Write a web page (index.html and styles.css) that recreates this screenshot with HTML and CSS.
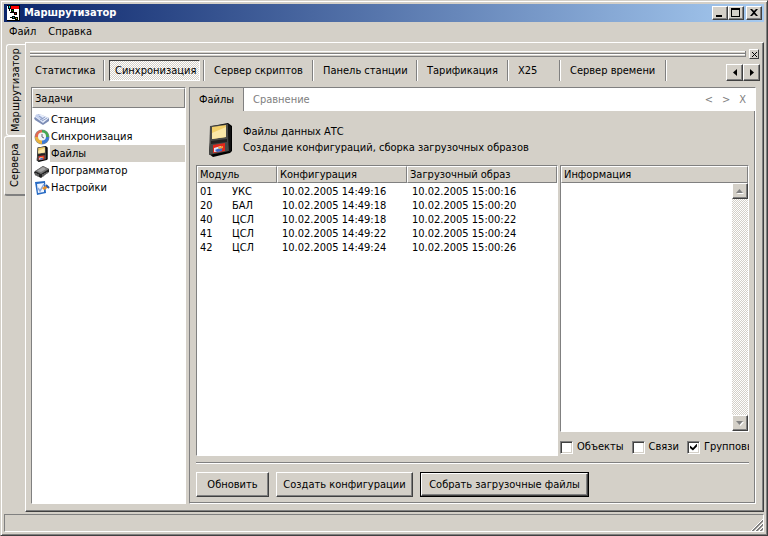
FILE: index.html
```html
<!DOCTYPE html>
<html lang="ru">
<head>
<meta charset="utf-8">
<title>Маршрутизатор</title>
<link rel="stylesheet" href="styles.css">
</head>
<body>
<svg class="defs" width="0" height="0" aria-hidden="true">
  <symbol id="floppy" viewBox="0 0 24 34">
    <path d="M4 3 20 0 24 3V28L22 30 5 34 1 31V28z" fill="#000"/>
    <path d="M2 3 20 1 21 28 1 32z" fill="#4a4a48"/>
    <path d="M20 1 23 4V28L21 29z" fill="#111"/>
    <path d="M4 4 18 2V14L4 16z" fill="#f2cf6a"/>
    <path d="M4 10 18 4V14L4 16z" fill="#fae7a8"/>
    <path d="M3 18 19 16V19L3 21z" fill="#222"/>
    <path d="M5 22 17 20V28L5 30z" fill="#e0281c"/>
    <path d="M6 25 13 23V28L6 29z" fill="#dfe6f5"/>
    <path d="M7 27 14 24 14 28 9 29z" fill="#3b67c4"/>
    <path d="M10 24 15 23V25L11 26z" fill="#f5a13a"/>
  </symbol>
</svg>
<div class="window">
  <header class="title">
    <svg class="app-icon" viewBox="0 0 13 16" shape-rendering="crispEdges" aria-hidden="true">
      <path d="M0 0H13V16H0z" fill="#000"/><path d="M4 1H12V4H4z" fill="#f00"/><path d="M3 4H12V15H3z" fill="#fff"/>
      <path d="M0 1H4V15H0z" fill="#fff"/>
      <path d="M1 0H4V4H1zM2 4H3V13H5V12H3V8H6V7H3z" fill="#000"/><path d="M2 1H3V3H2z" fill="#0dd"/>
      <path d="M4 4H7V8H4zM7 7H10V10H7zM5 11H8V14H5zM8 12H11V15H8z" fill="#000"/>
      <path d="M5 5H6V6H5z" fill="#0a0"/><path d="M8 8H9V9H8z" fill="#d00"/><path d="M9 13H10V14H9z" fill="#cc0"/><path d="M6 12H7V13H6z" fill="#0aa"/>
    </svg>
    <h1>Маршрутизатор</h1>
    <div class="caption">
      <button class="raised" aria-label="Свернуть"><svg viewBox="0 0 12 10"><path d="M2 7H8V9H2z"/></svg></button>
      <button class="raised" aria-label="Развернуть"><svg viewBox="0 0 12 10"><path d="M1 0H10V9H1zM2 2V8H9V2z" fill-rule="evenodd"/></svg></button>
      <button class="raised close" aria-label="Закрыть"><svg viewBox="0 0 12 10"><path d="M2 1H4L6 3 8 1H10L7 4.500 10 8H8L6 6 4 8H2L5 4.500z"/></svg></button>
    </div>
  </header>
  <nav class="menu"><button>Файл</button><button>Справка</button></nav>
  <div class="body">
    <div class="side-tabs">
      <button class="side-tab first">Маршрутизатор</button>
      <button class="side-tab current">Сервера</button>
    </div>
    <main class="page">
      <div class="grip"><span class="bars"></span><button class="raised tiny" aria-label="Скрыть панель"><svg viewBox="0 0 7 7"><path d="M1 1 6 6M6 1 1 6" stroke="#000" fill="none"/></svg></button></div>
      <div class="toolbar">
        <div class="tools">
          <div><button>Статистика</button></div>
          <div><button class="pressed">Синхронизация</button></div>
          <div><button>Сервер скриптов</button></div>
          <div><button>Панель станции</button></div>
          <div><button>Тарификация</button></div>
          <div><button>X25</button></div>
          <div><button>Сервер времени</button></div>
        </div>
        <div class="scrollers">
          <button class="raised" aria-label="Назад"><svg viewBox="0 0 4 7"><path d="M4 0V7L0 3.500z"/></svg></button>
          <button class="raised" aria-label="Вперёд"><svg viewBox="0 0 4 7"><path d="M0 0V7L4 3.500z"/></svg></button>
        </div>
      </div>
      <div class="columns">
        <section class="tasks">
          <h2 class="head">Задачи</h2>
          <ul>
            <li><svg viewBox="0 0 16 16"><path d="M0 6 5 2 15 6V9L9 13 1 8z" fill="#7d8db5"/><path d="M1 5 6 2 15 6 9 11z" fill="#e8eefb"/><path d="M1 4 3 2 10 6 8 9z" fill="#c3d0ee"/><path d="M6 8 11 5M8 9 13 6M5 4 9 7" stroke="#8e9dc4"/></svg><button>Станция</button></li>
            <li><svg viewBox="0 0 16 16"><circle cx="8" cy="8" r="7.500" fill="#8b8f96"/><path d="M8 8V1A7 7 0 0 1 15 8z" fill="#45a852"/><path d="M8 8H15A7 7 0 0 1 8 15z" fill="#3c7ad6"/><path d="M8 8V15A7 7 0 0 1 1 8z" fill="#eab23c"/><path d="M8 8H1A7 7 0 0 1 8 1z" fill="#e36a50"/><circle cx="8" cy="7.500" r="4" fill="#f1f4f7"/><path d="M8 5V8L10 9" fill="none" stroke="#667"/></svg><button>Синхронизация</button></li>
            <li class="selected"><svg viewBox="0 0 16 16"><use href="#floppy" x="2" y="0" width="12" height="16"/></svg><button>Файлы</button></li>
            <li><svg viewBox="0 0 16 16"><path d="M0 9 9 3 15 6V9L7 15 1 12z" fill="#222"/><path d="M1 8 9 3 15 6 7 11z" fill="#777"/><path d="M3 8 9 4 12 6 7 9z" fill="#a6a6a6"/><path d="M2 10V13M4 11V14M9 11V14M11 10V12M13 9V11" stroke="#999"/></svg><button>Программатор</button></li>
            <li><svg viewBox="0 0 16 16"><path d="M1 2 11 1 12 13 3 15z" fill="#286bc4"/><path d="M3 4 10 3 10 12 4 13z" fill="#f2f7ff"/><path d="M4 8 6 11 10 4" fill="none" stroke="#8aa6d8" stroke-width="1.500"/><path d="M8 8 13 5 15 7 10 10z" fill="#e8902c"/><path d="M12 5 15 8" stroke="#2a5aa8" stroke-width="2"/></svg><button>Настройки</button></li>
          </ul>
        </section>
        <section class="content">
          <div class="doc-tabs">
            <button class="doc-tab active">Файлы</button>
            <button class="doc-tab">Сравнение</button>
            <span class="doc-nav"><button>&lt;</button><button>&gt;</button><button>X</button></span>
          </div>
          <div class="inner">
            <div class="banner">
              <svg viewBox="0 0 24 34"><use href="#floppy" width="24" height="34"/></svg>
              <p>Файлы данных АТС<br>Создание конфигураций, сборка загрузочных образов</p>
            </div>
            <div class="panes">
              <div class="list sunken">
                <table>
                  <colgroup><col class="c1"><col class="c2"><col class="c3"><col></colgroup>
                  <thead><tr><th colspan="2">Модуль</th><th>Конфигурация</th><th>Загрузочный образ</th></tr></thead>
                  <tbody>
                    <tr><td>01</td><td>УКС</td><td>10.02.2005 14:49:16</td><td>10.02.2005 15:00:16</td></tr>
                    <tr><td>20</td><td>БАЛ</td><td>10.02.2005 14:49:18</td><td>10.02.2005 15:00:20</td></tr>
                    <tr><td>40</td><td>ЦСЛ</td><td>10.02.2005 14:49:18</td><td>10.02.2005 15:00:22</td></tr>
                    <tr><td>41</td><td>ЦСЛ</td><td>10.02.2005 14:49:22</td><td>10.02.2005 15:00:24</td></tr>
                    <tr><td>42</td><td>ЦСЛ</td><td>10.02.2005 14:49:24</td><td>10.02.2005 15:00:26</td></tr>
                  </tbody>
                </table>
              </div>
              <div class="info">
                <div class="info-box sunken">
                  <label class="head" for="info">Информация</label>
                  <div class="info-body">
                    <textarea id="info" readonly></textarea>
                    <div class="scrollbar">
                      <button class="raised" aria-label="Вверх"><svg viewBox="0 0 8 5"><path d="M4 1 8 5H1z" fill="#fff"/><path d="M3.500 0 7 4H0z" fill="#808080"/></svg></button>
                      <button class="raised" aria-label="Вниз"><svg viewBox="0 0 8 5"><path d="M1 1H8L4.500 5z" fill="#fff"/><path d="M0 0H7L3.500 4z" fill="#808080"/></svg></button>
                    </div>
                  </div>
                </div>
                <div class="checks">
                  <label><input type="checkbox">Объекты</label>
                  <label><input type="checkbox">Связи</label>
                  <label><input type="checkbox" checked>Групповые</label>
                </div>
              </div>
            </div>
            <div class="actions">
              <button class="raised">Обновить</button>
              <button class="raised wide">Создать конфигурации</button>
              <button class="default widest"><span class="raised">Собрать загрузочные файлы</span></button>
            </div>
          </div>
        </section>
      </div>
    </main>
  </div>
  <footer class="status"><svg viewBox="0 0 12 12" aria-hidden="true"><path d="M0 12 12 0M4 12 12 4M8 12 12 8" stroke="#fff"/><path d="M1 12 12 1M2 12 12 2M5 12 12 5M6 12 12 6M9 12 12 9M10 12 12 10" stroke="#808080"/></svg></footer>
</div>
</body>
</html>
```
FILE: styles.css
```css
:root {
  --face: #d4d0c8;
  --shadow: #808080;
  --dark: #404040;
}
* { box-sizing: border-box; }
body {
  margin: 0;
  background: var(--face);
  color: #000;
  font: 11px/14px "DejaVu Sans Condensed", "DejaVu Sans", sans-serif;
}
button {
  font: inherit;
  color: inherit;
  background: none;
  border: 0;
  padding: 0;
  white-space: nowrap;
}
h1, h2, p, ul { margin: 0; padding: 0; font: inherit; }
svg { display: block; flex: none; }
.defs { position: absolute; }

.raised {
  display: flex;
  align-items: center;
  justify-content: center;
  background: var(--face);
  border: 1px solid;
  border-color: #fff var(--dark) var(--dark) #fff;
  box-shadow: inset -1px -1px var(--shadow);
}
.sunken {
  background: #fff;
  border: 1px solid;
  border-color: var(--shadow) #fff #fff var(--shadow);
}

.window {
  height: 100vh;
  display: flex;
  flex-direction: column;
  padding: 3px 3px 3px;
  border: 1px solid;
  border-color: var(--face) var(--dark) var(--dark) var(--face);
  box-shadow: inset 1px 1px #fff, inset -1px -1px var(--shadow);
}
.title {
  display: flex;
  align-items: center;
  gap: 4px;
  height: 18px;
  padding: 0 2px 0 3px;
  background: linear-gradient(90deg, #0a246a, #a6caf0);
}
.title h1 { flex: 1; color: #fff; font-weight: bold; }
.app-icon { width: 13px; height: 16px; }
.caption { display: flex; }
.caption .raised { width: 16px; height: 14px; }
.caption .close { margin-left: 2px; }
.caption svg { width: 12px; height: 10px; }

.menu { display: flex; gap: 12px; height: 20px; padding: 0 5px; }

.body { flex: 1; display: flex; min-height: 0; }
.side-tabs { width: 21px; padding-top: 2px; display: flex; flex-direction: column; align-items: flex-end; }
.side-tab {
  writing-mode: vertical-rl;
  transform: rotate(180deg);
  width: 19px;
  height: 92px;
  border: 1px solid #fff;
  border-left: 0;
  border-radius: 0 3px 3px 0;
}
.side-tab.current {
  width: 21px;
  height: 60px;
  border-top: 2px solid var(--shadow);
}
.page {
  flex: 1;
  min-width: 0;
  display: flex;
  flex-direction: column;
  padding: 6px 7px 7px 4px;
  border: 1px solid;
  border-color: #fff var(--dark) var(--dark) #fff;
  box-shadow: inset -1px -1px var(--shadow);
}
.grip { display: flex; align-items: center; gap: 3px; height: 10px; margin-right: -3px; }
.bars {
  flex: 1;
  height: 6px;
  background: linear-gradient(#fff 1px, var(--face) 1px 2px, var(--shadow) 2px 3px, #fff 3px 4px, var(--face) 4px 5px, var(--shadow) 5px);
  border-right: 1px solid var(--shadow);
}
.tiny { width: 10px; height: 10px; box-shadow: none; }
.tiny svg { width: 7px; height: 7px; }

.toolbar { display: flex; justify-content: space-between; height: 28px; padding-top: 1px; margin-right: -4px; }
.tools { display: grid; grid-template-columns: 75px 100px 109px 104px 91px 52px 106px; height: 21px; }
.tools div {
  display: flex;
  padding: 0 4px;
  border-right: 1px solid #fff;
  box-shadow: inset -1px 0 var(--shadow);
}
.tools div:first-child { padding-left: 0; }
.tools button { flex: 1; padding-left: 5px; text-align: left; }
.tools .pressed {
  border: 1px solid;
  border-color: var(--dark) #fff #fff var(--dark);
  padding-top: 1px;
  background: repeating-conic-gradient(#fff 0 25%, var(--face) 0 50%) 0 0 / 2px 2px;
}
.scrollers { display: flex; padding-top: 4px; }
.scrollers .raised { width: 17px; height: 17px; }
.scrollers svg { width: 4px; height: 7px; }

.columns { flex: 1; min-height: 0; display: grid; grid-template-columns: 155px 1fr; gap: 3px; padding-left: 1px; }
.head {
  display: block;
  height: 17px;
  line-height: 16px;
  padding: 0 2px;
  background: var(--face);
  border: 1px solid;
  border-color: #fff var(--shadow) var(--shadow) #fff;
}
.tasks { background: #fff; border: 1px solid; border-color: var(--shadow) #fff #fff var(--shadow); }
.tasks .head { height: 20px; line-height: 20px; }
.tasks ul { list-style: none; padding-top: 3px; }
.tasks li { display: flex; align-items: center; height: 17px; padding-left: 2px; }
.tasks li svg { width: 16px; height: 16px; }
.tasks li button { flex: 1; height: 17px; padding-left: 1px; text-align: left; }
.tasks .selected button { background: var(--face); }

.content {
  display: flex;
  flex-direction: column;
  min-width: 0;
  border: 1px solid;
  border-color: var(--shadow) #fff #fff var(--shadow);
  box-shadow: inset -1px -1px var(--shadow);
}
.doc-tabs { display: flex; height: 23px; background: #fff; }
.doc-tab { padding: 0 9px; color: var(--shadow); }
.doc-tab.active { width: 54px; color: #000; background: var(--face); border-right: 1px solid var(--shadow); }
.doc-nav { display: flex; gap: 9px; margin-left: auto; padding-right: 9px; color: var(--shadow); }
.inner { flex: 1; min-height: 0; display: flex; flex-direction: column; padding: 12px 6px 6px; }
.banner { display: flex; align-items: center; gap: 11px; padding-left: 12px; height: 34px; }
.banner svg { width: 24px; height: 34px; }
.banner p { line-height: 16px; white-space: nowrap; }
.panes { flex: 1; min-height: 0; display: grid; grid-template-columns: minmax(0, 362fr) minmax(0, 189fr); gap: 2px; margin-top: 8px; }

.list table { width: 100%; border-collapse: separate; border-spacing: 0; table-layout: fixed; }
.c1 { width: 32px; }
.c2 { width: 48px; }
.c3 { width: 130px; }
.list th {
  height: 17px;
  padding: 0 2px;
  text-align: left;
  font-weight: normal;
  background: var(--face);
  border: 1px solid;
  border-color: #fff var(--shadow) var(--shadow) #fff;
}
.list td { height: 14px; padding: 0 3px; white-space: nowrap; }
.list td:nth-child(n+3) { padding-left: 5px; }
.list tbody::before { content: ""; display: block; height: 2px; }

.info { display: flex; flex-direction: column; min-width: 0; }
.info-box { flex: 1; display: flex; flex-direction: column; }
.info-body { flex: 1; display: flex; }
.info textarea { flex: 1; min-width: 0; resize: none; border: 0; outline: 0; font: inherit; }
.scrollbar {
  display: flex;
  flex-direction: column;
  justify-content: space-between;
  background: repeating-conic-gradient(#fff 0 25%, var(--face) 0 50%) 0 0 / 2px 2px;
}
.scrollbar .raised { width: 16px; height: 16px; }
.scrollbar svg { width: 8px; height: 5px; }
.checks { display: flex; gap: 8px; height: 24px; padding-top: 6px; overflow: hidden; white-space: nowrap; }
.checks label { display: flex; align-items: center; gap: 4px; flex: none; }
.checks input {
  appearance: none;
  width: 13px;
  height: 13px;
  margin: 0;
  background: #fff;
  border: 1px solid;
  border-color: var(--shadow) #fff #fff var(--shadow);
  box-shadow: inset 1px 1px var(--dark), inset -1px -1px var(--face);
}
.checks input:checked::after {
  content: "";
  display: block;
  width: 7px;
  height: 7px;
  margin: 2px;
  background: #000;
  clip-path: polygon(0 29%, 43% 64%, 100% 0, 100% 43%, 43% 100%, 0 64%);
}

.actions {
  display: flex;
  gap: 7px;
  margin-top: 6px;
  padding-top: 9px;
  border-top: 1px solid var(--shadow);
  box-shadow: inset 0 1px #fff;
}
.actions button { height: 25px; min-width: 73px; }
.actions .wide { min-width: 137px; }
.actions .widest { min-width: 169px; }
.default { display: flex; border: 1px solid #000; }
.default .raised { flex: 1; height: 23px; }

.status {
  display: flex;
  justify-content: flex-end;
  align-items: flex-end;
  height: 18px;
  margin-top: 2px;
  border: 1px solid;
  border-color: var(--shadow) #fff #fff var(--shadow);
}
.status svg { width: 12px; height: 12px; }
```
